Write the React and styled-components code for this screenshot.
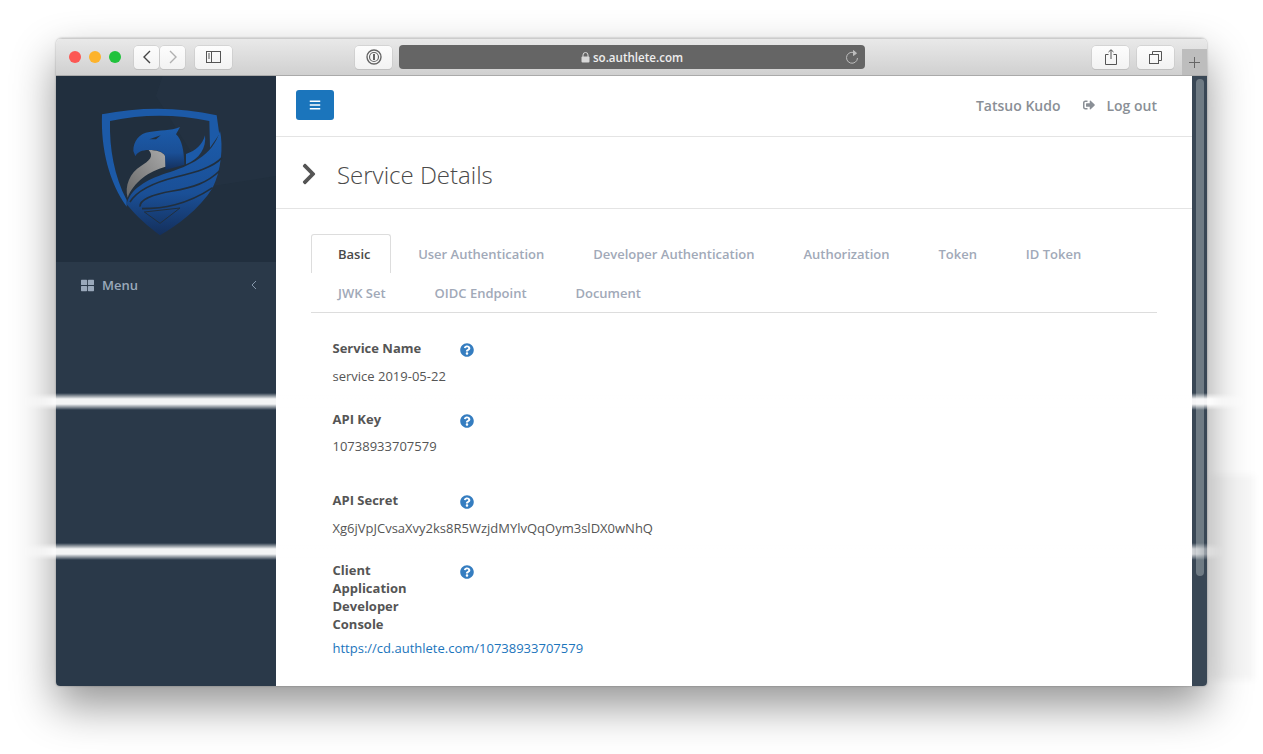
import React from 'react'
import styled, { createGlobalStyle } from 'styled-components'
import { FaBars, FaChevronRight, FaQuestionCircle, FaSignOutAlt, FaThLarge } from 'react-icons/fa'

const GlobalStyle = createGlobalStyle`
    html, body {
        margin: 0;
        padding: 0;
        background: #fff;
        font-family: "Open Sans", "Liberation Sans", sans-serif;
    }
    * {
        box-sizing: border-box;
    }
`

const topTabs = ['Basic', 'User Authentication', 'Developer Authentication', 'Authorization', 'Token', 'ID Token']
const bottomTabs = ['JWK Set', 'OIDC Endpoint', 'Document']

function Logo() {
    return (
        <LogoSvg viewBox="0 0 660 558">
            <defs>
                <linearGradient id="shield" x1="0" y1="0" x2="0" y2="1">
                    <stop offset="0" stopColor="#1c5cab" />
                    <stop offset="0.6" stopColor="#1a4f96" />
                    <stop offset="1" stopColor="#142f5b" />
                </linearGradient>
                <linearGradient id="neck" x1="1" y1="0" x2="0" y2="1">
                    <stop offset="0" stopColor="#a8a8a8" />
                    <stop offset="1" stopColor="#686868" />
                </linearGradient>
            </defs>
            <polygon points="320,0 660,0 660,300 470,330 300,60" fill="#283848" opacity="0.3" />
            <path
                fill="#1c5aa8"
                d="M138 115 C250 92 370 92 482 118 L490 175 L462 215 L460 135 C360 114 260 114 162 135 C160 220 175 300 212 372 L212 392 C160 320 134 220 138 115 Z"
            />
            <path
                fill="url(#shield)"
                d="M232 225 C232 195 250 172 280 168 C310 162 345 165 372 153 L360 175 C378 190 384 225 385 266 L328 282 L327 238 C315 224 298 221 278 222 C258 222 244 228 238 241 Z"
            />
            <path fill="#212f3e" d="M280 190 L314 178 L300 190 Z" />
            <path
                fill="url(#neck)"
                d="M278 222 C300 222 322 228 327 240 L328 272 C280 285 232 318 215 365 C205 330 222 290 255 270 C280 255 295 240 278 222 Z"
            />
            <path fill="#1c5aa8" d="M390 234 C420 225 440 205 447 178 C452 215 430 250 390 265 Z" />
            <path
                fill="url(#shield)"
                d="M212 385 C222 340 270 312 330 292 C400 270 470 240 492 165 C502 210 496 285 470 335 C430 400 360 450 312 478 C280 455 240 420 212 385 Z"
            />
            <g fill="none" stroke="#212f3e" strokeWidth="5">
                <path d="M222 378 C245 340 300 318 360 303 C420 288 470 275 498 245" />
                <path d="M252 392 C250 372 290 355 350 345 C410 335 455 320 490 285" />
                <path d="M258 398 C320 398 390 388 470 335" />
                <path strokeWidth="3" d="M265 408 L372 396 L312 442 Z" />
            </g>
        </LogoSvg>
    )
}

function Field({ label, gap, labelGap = 10, children }) {
    return (
        <FieldBlock $gap={gap}>
            <LabelRow $gap={labelGap}>
                <FieldLabel>{label}</FieldLabel>
                <HelpIcon />
            </LabelRow>
            {children}
        </FieldBlock>
    )
}

function App() {
    return (
        <Page>
            <GlobalStyle />
            <Window>
                <TitleBar>
                    <Lights>
                        <Light $color="#fc5753" />
                        <Light $color="#fdb32b" />
                        <Light $color="#20c23c" />
                    </Lights>
                    <NavGroup>
                        <ToolButton $w={25}>
                            <svg width="12" height="14" viewBox="0 0 12 14" fill="none" stroke="#444" strokeWidth="1.4"><path d="M9 1 L3 7 L9 13" /></svg>
                        </ToolButton>
                        <ToolButton $w={25}>
                            <svg width="12" height="14" viewBox="0 0 12 14" fill="none" stroke="#b0b0b0" strokeWidth="1.4"><path d="M3 1 L9 7 L3 13" /></svg>
                        </ToolButton>
                    </NavGroup>
                    <ToolButton $w={37} $ml={10}>
                        <svg width="16" height="12" viewBox="0 0 16 12" fill="none" stroke="#555"><rect x="0.5" y="0.5" width="14" height="11" /><path d="M5.5 0.5 V11.5 M2 3 H4 M2 5 H4 M2 7 H4" /></svg>
                    </ToolButton>
                    <ToolButton $w={37} $ml={123}>
                        <svg width="16" height="16" viewBox="0 0 16 16" fill="none" stroke="#666"><circle cx="8" cy="8" r="7" strokeWidth="1.4" /><circle cx="8" cy="8" r="4.5" strokeWidth="1.2" /><path d="M8 5 V11" strokeWidth="2" /></svg>
                    </ToolButton>
                    <AddressBar>
                        <svg width="9" height="11" viewBox="0 0 9 11" fill="#d8d8d8"><rect x="0.5" y="4.5" width="8" height="6" rx="1" /><path d="M2 5 V3 a2.5 2.5 0 0 1 5 0 V5" fill="none" stroke="#d8d8d8" /></svg>
                        <AddressText>so.authlete.com</AddressText>
                        <ReloadIcon width="14" height="15" viewBox="0 0 14 15" fill="none" stroke="#bdbdbd"><path d="M10.5 3.5 A5.5 5.5 0 1 0 12.5 8" /><path d="M8.5 0.5 L11.5 3.2 L8.5 5.5 Z" fill="#bdbdbd" /></ReloadIcon>
                    </AddressBar>
                    <ToolButton $w={37} $ml="auto">
                        <svg width="12" height="16" viewBox="0 0 12 16" fill="none" stroke="#555"><path d="M3.5 5.5 H0.5 V15.5 H11.5 V5.5 H8.5 M6 10 V1 M3.5 3 L6 0.7 L8.5 3" /></svg>
                    </ToolButton>
                    <ToolButton $w={37} $ml={8}>
                        <svg width="13" height="13" viewBox="0 0 13 13" fill="none" stroke="#555"><rect x="0.5" y="3.5" width="9" height="9" /><path d="M3.5 3.5 V0.5 H12.5 V9.5 H9.5" /></svg>
                    </ToolButton>
                    <NewTab>
                        <svg width="11" height="11" viewBox="0 0 11 11" stroke="#666"><path d="M5.5 0 V11 M0 5.5 H11" /></svg>
                    </NewTab>
                </TitleBar>
                <Body>
                    <Sidebar>
                        <SidebarHeader>
                            <Logo />
                        </SidebarHeader>
                        <MenuRow>
                            <MenuLabel>
                                <FaThLarge size={13} />
                                <span>Menu</span>
                            </MenuLabel>
                            <svg width="6" height="10" viewBox="0 0 6 10" fill="none" stroke="#8496a9"><path d="M5 1 L1 5 L5 9" /></svg>
                        </MenuRow>
                    </Sidebar>
                    <Main>
                        <TopBar>
                            <MenuButton><FaBars size={12} /></MenuButton>
                            <UserArea>
                                <UserLink>Tatsuo Kudo</UserLink>
                                <UserLink><FaSignOutAlt size={12} /> <LogOutText>Log out</LogOutText></UserLink>
                            </UserArea>
                        </TopBar>
                        <PageHeader>
                            <FaChevronRight size={24} color="#555" />
                            <PageTitle>Service Details</PageTitle>
                        </PageHeader>
                        <Content>
                            <Tabs>
                                <TabRow>
                                    {topTabs.map((tab, i) => (
                                        <Tab key={tab} $active={i === 0}>{tab}</Tab>
                                    ))}
                                </TabRow>
                                <TabRow>
                                    {bottomTabs.map(tab => (
                                        <Tab key={tab}>{tab}</Tab>
                                    ))}
                                </TabRow>
                            </Tabs>
                            <Field label="Service Name" gap={25}>
                                <Value>service 2019-05-22</Value>
                            </Field>
                            <Field label="API Key" gap={36} labelGap={9}>
                                <Value>10738933707579</Value>
                            </Field>
                            <Field label="API Secret" gap={24}>
                                <Value>Xg6jVpJCvsaXvy2ks8R5WzjdMYlvQqOym3slDX0wNhQ</Value>
                            </Field>
                            <Field label="Client Application Developer Console" gap={24} labelGap={6}>
                                <LinkValue href="#">https://cd.authlete.com/10738933707579</LinkValue>
                            </Field>
                        </Content>
                    </Main>
                    <ScrollTrack>
                        <ScrollThumb />
                    </ScrollTrack>
                </Body>
            </Window>
            <Band $top={393} $width={1230} />
            <Band $top={543} $width={1205} />
            <Smudge />
        </Page>
    )
}

export default App

const Page = styled.div`
    position: relative;
    width: 1263px;
    height: 754px;
    padding: 38px 56px 68px;
    overflow: hidden;
    background: #fff;
`

const Window = styled.div`
    width: 1151px;
    height: 648px;
    display: flex;
    flex-direction: column;
    border-radius: 6px 6px 4px 4px;
    overflow: hidden;
    box-shadow: 0 20px 44px rgba(0, 0, 0, 0.42), 0 0 2px rgba(0, 0, 0, 0.35);
`

const TitleBar = styled.div`
    height: 38px;
    flex: none;
    display: flex;
    align-items: center;
    padding: 0 0 0 13px;
    background: linear-gradient(#e9e9e9, #d0d0d0);
    border-bottom: 1px solid #aaa;
    border-top: 1px solid #ccc;
`

const Lights = styled.div`
    display: flex;
    gap: 8px;
    margin-right: 13px;
`

const Light = styled.span`
    width: 12px;
    height: 12px;
    border-radius: 50%;
    background: ${props => props.$color};
`

const NavGroup = styled.div`
    display: flex;
    gap: 1px;
`

const ToolButton = styled.div`
    width: ${props => props.$w}px;
    height: 23px;
    margin-left: ${props => props.$ml === 'auto' ? 'auto' : `${props.$ml || 0}px`};
    display: flex;
    align-items: center;
    justify-content: center;
    background: linear-gradient(#fdfdfd, #f2f2f2);
    border-radius: 4px;
    box-shadow: 0 0 0 0.5px #c4c4c4, 0 1px 0 #bbb;
`

const AddressBar = styled.div`
    width: 466px;
    height: 24px;
    margin-left: 7px;
    position: relative;
    display: flex;
    align-items: center;
    justify-content: center;
    gap: 3px;
    background: #656565;
    border-radius: 4px;
`

const AddressText = styled.span`
    font-size: 11.6px;
    font-weight: 600;
    color: #eee;
`

const ReloadIcon = styled.svg`
    position: absolute;
    right: 6px;
    top: 5px;
`

const NewTab = styled.div`
    width: 25px;
    height: 26px;
    margin-left: 8px;
    align-self: flex-end;
    display: flex;
    align-items: center;
    justify-content: center;
    background: #bdbdbd;
`

const Body = styled.div`
    flex: 1;
    display: flex;
    min-height: 0;
`

const Sidebar = styled.div`
    width: 220px;
    flex: none;
    background: #2a3949;
`

const SidebarHeader = styled.div`
    height: 186px;
    background: #212f3e;
`

const LogoSvg = styled.svg`
    display: block;
    width: 220px;
    height: 186px;
`

const MenuRow = styled.div`
    height: 46px;
    display: flex;
    align-items: center;
    justify-content: space-between;
    padding: 0 19px 0 25px;
`

const MenuLabel = styled.div`
    display: flex;
    align-items: center;
    gap: 8px;
    font-size: 13px;
    font-weight: 600;
    color: #9aa9bb;
`

const Main = styled.div`
    flex: 1;
    background: #fff;
    min-width: 0;
`

const TopBar = styled.div`
    height: 61px;
    display: flex;
    align-items: center;
    justify-content: space-between;
    padding: 0 35px 2px 20px;
    border-bottom: 1px solid #e4e4e4;
`

const MenuButton = styled.div`
    width: 38px;
    height: 30px;
    display: flex;
    align-items: center;
    justify-content: center;
    color: #fff;
    background: #1b75bc;
    border-radius: 3px;
`

const UserArea = styled.div`
    display: flex;
    gap: 23px;
`

const UserLink = styled.div`
    display: flex;
    align-items: center;
    font-size: 14px;
    font-weight: 600;
    color: #8a8f96;
`

const LogOutText = styled.span`
    margin-left: 11px;
`

const PageHeader = styled.div`
    height: 72px;
    display: flex;
    align-items: center;
    padding: 3px 0 0 21px;
    border-bottom: 1px solid #e4e4e4;
`

const PageTitle = styled.h1`
    margin: 0 0 0 16px;
    font-size: 24px;
    font-weight: 300;
    color: #4a4a4a;
`

const Content = styled.div`
    padding: 25px 35px 0;
`

const Tabs = styled.div`
    border-bottom: 1px solid #ddd;
    margin-bottom: 26px;
`

const TabRow = styled.div`
    display: flex;
    height: 39px;
`

const Tab = styled.div`
    display: flex;
    align-items: center;
    padding: 0 ${props => props.$active ? 19.6 : 20.9}px 0 26px;
    font-size: 13px;
    font-weight: 600;
    color: ${props => props.$active ? '#4a4a4a' : '#a1a9b8'};
    border: ${props => props.$active ? '1px solid #ddd' : '1px solid transparent'};
    border-bottom: 0;
    border-radius: 3px 3px 0 0;
`

const FieldBlock = styled.div`
    padding-left: 21.5px;
    margin-bottom: ${props => props.$gap}px;
`

const LabelRow = styled.div`
    display: flex;
    align-items: flex-start;
    margin-bottom: ${props => props.$gap}px;
`

const FieldLabel = styled.div`
    width: 127px;
    padding-right: 27px;
    font-size: 13px;
    font-weight: 700;
    line-height: 18px;
    color: #555;
`

const HelpIcon = styled(FaQuestionCircle)`
    width: 14px;
    height: 14px;
    margin-top: 4px;
    color: #357dc0;
`

const Value = styled.div`
    font-size: 13px;
    line-height: 18px;
    color: #555;
`

const LinkValue = styled.a`
    display: block;
    font-size: 13px;
    line-height: 18px;
    color: #1b75bc;
    text-decoration: none;
`

const ScrollTrack = styled.div`
    width: 15px;
    flex: none;
    padding: 3px 3px 0 4px;
    background: #394755;
`

const ScrollThumb = styled.div`
    height: 497px;
    border-radius: 4px;
    background: #6f7b84;
`

const Band = styled.div`
    position: absolute;
    left: 20px;
    top: ${props => props.$top}px;
    width: ${props => props.$width}px;
    height: 17px;
    background: linear-gradient(rgba(255,255,255,0), rgba(255,255,255,0.95) 35%, rgba(255,255,255,0.95) 65%, rgba(255,255,255,0));
    mask-image: linear-gradient(90deg, transparent, #000 36px, #000 calc(100% - 40px), transparent);
`

const Smudge = styled.div`
    position: absolute;
    left: 1212px;
    top: 475px;
    width: 42px;
    height: 205px;
    background: rgba(0, 0, 0, 0.03);
    filter: blur(3px);
`
